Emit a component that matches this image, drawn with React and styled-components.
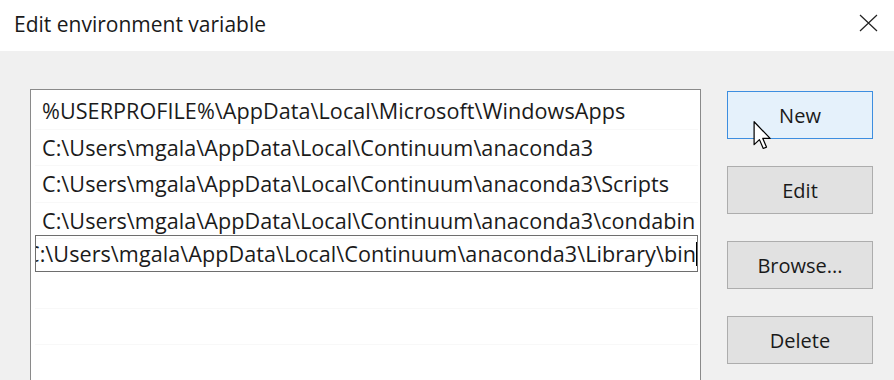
import styled, { createGlobalStyle } from "styled-components";

const Global = createGlobalStyle`
  html, body { margin: 0; padding: 0; background: #f0f0f0; }
  body { font-family: "Open Sans", "Noto Sans", sans-serif; color: #1b1b1b; }
`

const Window = styled.div`
  width: 894px;
  height: 380px;
  display: flex;
  flex-direction: column;
  overflow: hidden;
  position: relative;
`

const TitleBar = styled.div`
  height: 51px;
  background: #ffffff;
  display: flex;
  align-items: center;
  justify-content: space-between;
  padding: 0 16px 0 14px;
  flex-shrink: 0;
`

const Title = styled.div`
  font-size: 21px;
  color: #1a1a1a;
  margin-top: -3px;
`

const Close = styled.div`
  width: 20px;
  height: 20px;
  display: flex;
  align-items: center;
  justify-content: center;
  margin-top: -5px;
`

const Body = styled.div`
  flex: 1;
  background: #f0f0f0;
  display: flex;
  padding: 38px 0 0 30px;
`

const List = styled.div`
  width: 671px;
  height: 320px;
  background: #fff;
  border: 1px solid #8a8a8a;
  box-sizing: border-box;
  padding: 3px 2px 0 4px;
  display: flex;
  flex-direction: column;
`

const Row = styled.div`
  height: 36.5px;
  flex-shrink: 0;
  display: flex;
  align-items: center;
  padding-left: 7px;
  font-size: 21.6px;
  letter-spacing: 0.05px;
  white-space: nowrap;
  border-bottom: 1px solid #f8f8f8;
  box-sizing: border-box;
`

const EditRow = styled.div`
  height: 37px;
  flex-shrink: 0;
  margin-top: -4px;
  display: flex;
  align-items: center;
  border: 1px solid #6e6e6e;
  box-sizing: border-box;
  overflow: hidden;
  font-size: 21.6px;
  letter-spacing: 0.05px;
  white-space: nowrap;
  position: relative;
`

const EditText = styled.span`
  margin-left: -10px;
`

const Caret = styled.span`
  position: absolute;
  right: 0;
  top: 6px;
  width: 1px;
  height: 24px;
  background: #000;
`

const Buttons = styled.div`
  display: flex;
  flex-direction: column;
  gap: 27px;
  margin-left: 26px;
  padding-top: 2px;
`

const Button = styled.div`
  width: 146px;
  height: 48px;
  box-sizing: border-box;
  display: flex;
  align-items: center;
  justify-content: center;
  font-size: 20px;
  color: #1a1a1a;
  background: ${p => (p.active ? "#e5f1fb" : "#e1e1e1")};
  border: 1px solid ${p => (p.active ? "#3d8ee0" : "#adadad")};
  padding-top: 1px;
`

const Cursor = styled.svg`
  position: absolute;
  left: 753px;
  top: 121px;
`

const rows = [
  "%USERPROFILE%\\AppData\\Local\\Microsoft\\WindowsApps",
  "C:\\Users\\mgala\\AppData\\Local\\Continuum\\anaconda3",
  "C:\\Users\\mgala\\AppData\\Local\\Continuum\\anaconda3\\Scripts",
  "C:\\Users\\mgala\\AppData\\Local\\Continuum\\anaconda3\\condabin",
]

export default function App() {
  return (
    <>
      <Global />
      <Window>
        <TitleBar>
          <Title>Edit environment variable</Title>
          <Close>
            <svg width="19" height="18" viewBox="0 0 19 18">
              <path d="M1 1 L18 17 M18 1 L1 17" stroke="#222" strokeWidth="1.2" fill="none" />
            </svg>
          </Close>
        </TitleBar>
        <Body>
          <List>
            {rows.map(r => (
              <Row key={r}>{r}</Row>
            ))}
            <EditRow>
              <EditText>C:\Users\mgala\AppData\Local\Continuum\anaconda3\Library\bin</EditText>
              <Caret />
            </EditRow>
            <Row />
            <Row />
            <Row />
          </List>
          <Buttons>
            <Button active>New</Button>
            <Button>Edit</Button>
            <Button>Browse...</Button>
            <Button>Delete</Button>
          </Buttons>
        </Body>
        <Cursor width="19" height="29" viewBox="0 0 12 19">
          <path d="M0.5 0.5 L0.5 15.5 L4 12.2 L6.5 18 L8.6 17.1 L6.2 11.4 L11 11.4 Z" fill="#fff" stroke="#000" strokeWidth="0.8" strokeLinejoin="round" />
        </Cursor>
      </Window>
    </>
  )
}
